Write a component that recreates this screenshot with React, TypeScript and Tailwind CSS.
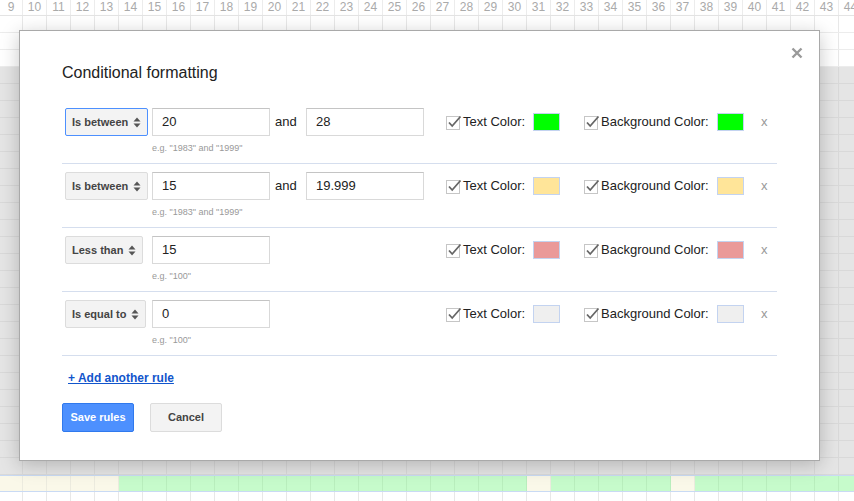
import React from 'react';

const COLS = Array.from({ length: 36 }, (_, i) => 9 + i);
const ROWS = Array.from({ length: 29 }, (_, i) => i);
const BEIGE = [0, 1, 2, 3, 4, 22, 28];

type Rule = {
  op: string;
  a: string;
  b?: string;
  hint: string;
  color: string;
  focus?: boolean;
};

const RULES: Rule[] = [
  { op: 'Is between', a: '20', b: '28', hint: 'e.g. "1983" and "1999"', color: 'bg-[#00ff00]', focus: true },
  { op: 'Is between', a: '15', b: '19.999', hint: 'e.g. "1983" and "1999"', color: 'bg-[#ffe599]' },
  { op: 'Less than', a: '15', hint: 'e.g. "100"', color: 'bg-[#ea9999]' },
  { op: 'Is equal to', a: '0', hint: 'e.g. "100"', color: 'bg-[#efefef]' },
];

const cellClass = (r: number, c: number) => {
  const w = c === 0 ? 'w-[23px]' : 'w-[24px]';
  if (r < 3 || r > 27) return `${w} h-full shrink-0 border-r border-[#e8e8e8]`;
  if (r === 27) {
    return BEIGE.includes(c)
      ? `${w} h-full shrink-0 border-r border-[#ecebdf] bg-[#faf8e9]`
      : `${w} h-full shrink-0 border-r border-[#b9eebd] bg-[#c6fbcb]`;
  }
  return `${w} h-full shrink-0 border-r border-[#d9d9d9] bg-[#e5e5e5]`;
};

const rowClass = (r: number) => {
  if (r === 27) return 'flex h-[17px] border-t border-b border-[#c9daf4]';
  if (r < 3 || r > 27) return 'flex h-[17px] border-b border-[#ececec]';
  return 'flex h-[17px] border-b border-[#d9d9d9] bg-[#e5e5e5]';
};

const UpDown = () => (
  <svg width="8" height="11" viewBox="0 0 8 11">
    <path d="M4 0.5 L7.5 4.5 L0.5 4.5 Z" fill="#555" />
    <path d="M4 10.5 L7.5 6.5 L0.5 6.5 Z" fill="#555" />
  </svg>
);

const Check = () => (
  <svg width="17" height="16" viewBox="0 0 17 16" className="shrink-0">
    <rect x="0.5" y="2.5" width="13" height="13" fill="#fff" stroke="#c6c6c6" />
    <path d="M3 8.5 L6.2 12 L14.5 2.5" fill="none" stroke="#666" strokeWidth="1.8" />
  </svg>
);

const Field = ({ value }: { value: string }) => (
  <div className="w-[118px] h-[28px] shrink-0 flex items-center pl-[9px] bg-white border border-[#d9d9d9] border-t-[#c4c4c4] text-[13px] text-[#222]">
    {value}
  </div>
);

const RuleRow = ({ rule }: { rule: Rule }) => (
  <div className="border-b border-[#d5deee] pt-[8px] pb-[9px]">
    <div className="flex items-center h-[28px]">
      <div className="w-[384px] shrink-0 flex items-center">
        <div className="w-[90px] shrink-0 pl-[3px]">
          <div
            className={
              rule.focus
                ? 'inline-flex items-center gap-[5px] h-[28px] px-[6px] rounded-[2px] border border-[#4d90fe] bg-[#f3f3f3] text-[11px] font-bold text-[#444]'
                : 'inline-flex items-center gap-[5px] h-[28px] px-[6px] rounded-[2px] border border-[#dcdcdc] bg-[#f3f3f3] text-[11px] font-bold text-[#444]'
            }
          >
            <span>{rule.op}</span>
            <UpDown />
          </div>
        </div>
        <Field value={rule.a} />
        {rule.b && (
          <>
            <div className="w-[36px] shrink-0 pl-[5px] text-[13px] text-[#222]">and</div>
            <Field value={rule.b} />
          </>
        )}
      </div>
      <div className="w-[138px] shrink-0 flex items-center text-[13px] text-[#222]">
        <Check />
        <span>Text Color:</span>
        <div className={`ml-[8px] w-[27px] h-[18px] border border-[#c3d3f0] ${rule.color}`} />
      </div>
      <div className="w-[177px] shrink-0 flex items-center text-[13px] text-[#222]">
        <Check />
        <span>Background Color:</span>
        <div className={`ml-[8px] w-[27px] h-[18px] border border-[#c3d3f0] ${rule.color}`} />
      </div>
      <span className="text-[13px] text-[#999]">x</span>
    </div>
    <div className="pl-[90px] mt-[6px] text-[9px] leading-[12px] text-[#999]">{rule.hint}</div>
  </div>
);

export default function App() {
  return (
    <div className="relative w-[854px] h-[501px] overflow-hidden bg-white font-['Liberation_Sans',Arial,sans-serif]">
      {/* sheet header */}
      <div className="flex h-[16px] border-b border-[#e4e4e4]">
        {COLS.map((n, i) => (
          <div
            key={n}
            className={
              i === 0
                ? 'w-[23px] shrink-0 h-full border-r border-[#ececec] text-center text-[12px] leading-[15px] text-[#aaa]'
                : 'w-[24px] shrink-0 h-full border-r border-[#ececec] text-center text-[12px] leading-[15px] text-[#aaa]'
            }
          >
            {n}
          </div>
        ))}
      </div>
      {/* sheet grid */}
      {ROWS.map((r) => (
        <div key={r} className={rowClass(r)}>
          {COLS.map((n, c) => (
            <div key={n} className={cellClass(r, c)} />
          ))}
        </div>
      ))}

      {/* dialog */}
      <div className="absolute left-[19px] top-[30px] w-[801px] h-[431px] bg-white border border-[#a9a9a9] shadow-[0_4px_18px_rgba(0,0,0,0.22)]">
        <svg className="absolute left-[771px] top-[16px]" width="12" height="12" viewBox="0 0 12 12">
          <path d="M1.5 1.5 L10.5 10.5 M10.5 1.5 L1.5 10.5" stroke="#9a9a9a" strokeWidth="2.4" />
        </svg>
        <div className="pl-[42px] pr-[42px] pt-[32px]">
          <h2 className="text-[16px] leading-[20px] text-[#222] mb-[17px]">Conditional formatting</h2>
          {RULES.map((rule, i) => (
            <RuleRow key={i} rule={rule} />
          ))}
          <div className="mt-[14px] pl-[6px] text-[12px] leading-[16px] font-bold text-[#15c] underline">
            + Add another rule
          </div>
          <div className="mt-[17px] flex gap-[16px]">
            <button className="w-[72px] h-[29px] rounded-[2px] border border-[#3079ed] bg-[#4d90fe] text-white text-[11px] font-bold">
              Save rules
            </button>
            <button className="w-[72px] h-[29px] rounded-[2px] border border-[#dcdcdc] bg-[#f3f3f3] text-[#444] text-[11px] font-bold">
              Cancel
            </button>
          </div>
        </div>
      </div>
    </div>
  );
}
